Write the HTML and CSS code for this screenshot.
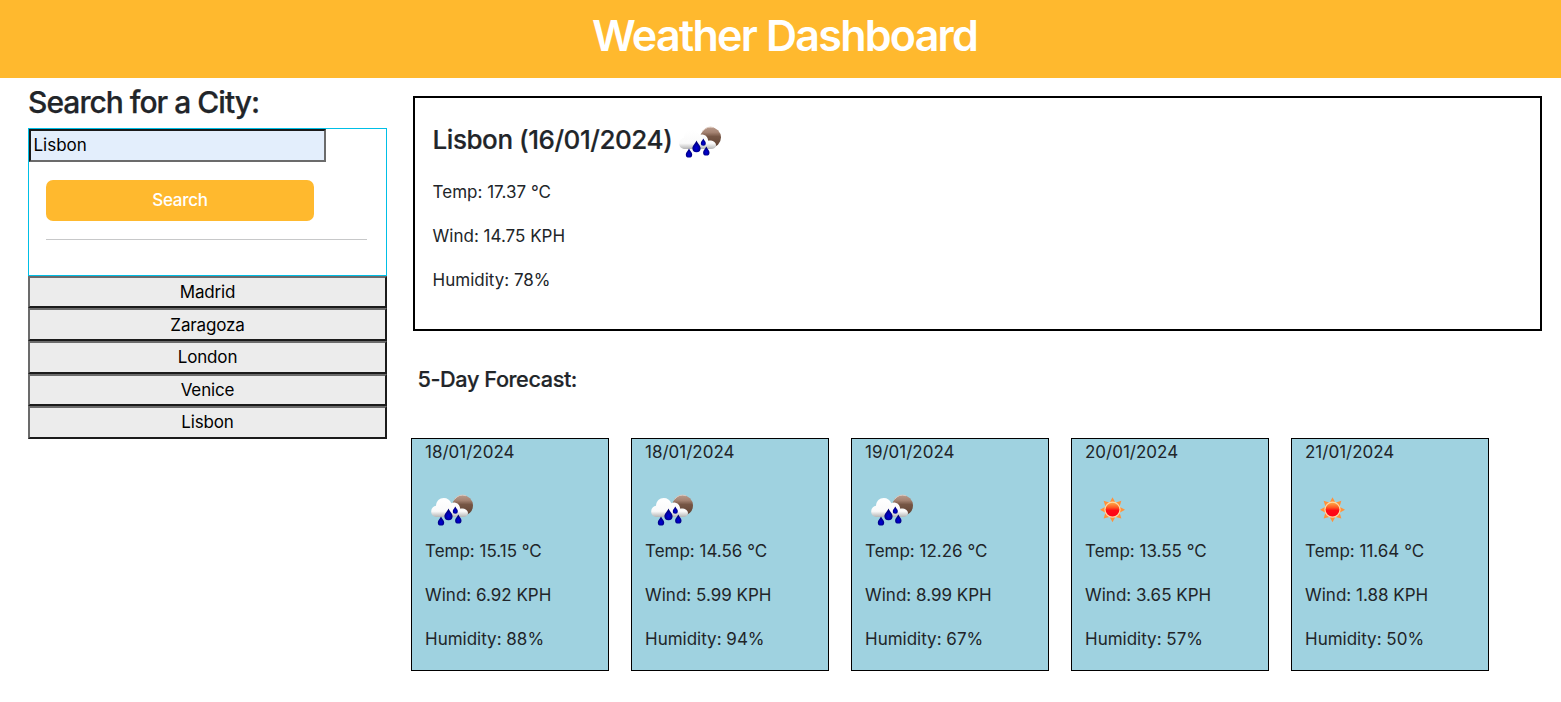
FILE: index.html
```html
<!DOCTYPE html>
<html lang="en">
<head>
<meta charset="utf-8">
<title>Weather Dashboard</title>
<link rel="stylesheet" href="styles.css">
</head>
<body>
<svg class="defs" width="0" height="0" aria-hidden="true">
  <defs>
    <linearGradient id="cloud" x1="0" y1="0" x2="0" y2="1">
      <stop offset="0" stop-color="#fff"/><stop offset=".7" stop-color="#fafafa"/><stop offset="1" stop-color="#b4b4b4"/>
    </linearGradient>
    <linearGradient id="disc" x1="0" y1="0" x2="0" y2="1">
      <stop offset="0" stop-color="#b8998a"/><stop offset=".25" stop-color="#a58372"/><stop offset=".45" stop-color="#765645"/><stop offset="1" stop-color="#5e4132"/>
    </linearGradient>
    <radialGradient id="drop" cx=".5" cy=".65" r=".6">
      <stop offset="0" stop-color="#0000dc"/><stop offset="1" stop-color="#00006a"/>
    </radialGradient>
    <linearGradient id="sun" x1="0" y1="0" x2="0" y2="1">
      <stop offset="0" stop-color="#ffb14a"/><stop offset=".35" stop-color="#ff5a22"/><stop offset=".55" stop-color="#ff0a14"/><stop offset="1" stop-color="#ff0018"/>
    </linearGradient>
    <symbol id="rain" viewBox="0 0 55 55">
      <circle cx="37.700" cy="22.500" r="10.300" fill="url(#disc)"/>
      <path d="M29.500 16.500A10.400 10.400 0 0 1 41 12.700" fill="none" stroke="#dcc8bd" stroke-width="1"/>
      <path d="M12 34C8.500 34 6.200 31.700 6.200 28.500C6.200 25.500 8 23.200 11 22.800C11.300 18 14.500 15 18.800 15C22.300 15 25 17 26.300 20.200C27.500 19.500 29 19.400 30.500 19.700C33.500 20.400 35 22.700 35.200 25.700C39.500 25.200 43 27.200 43 30.200C43 32.500 41 34 38 34Z" fill="url(#cloud)"/>
      <g fill="url(#drop)">
        <path d="M23.500 25.500C25 29 27.600 30.700 27.600 33.200A4.100 4.100 0 0 1 19.400 33.200C19.400 30.700 22 29 23.500 25.500Z"/>
        <path d="M30.300 23.500C31.300 25.700 32.800 26.500 32.800 28.200A2.500 2.500 0 0 1 27.800 28.200C27.800 26.500 29.300 25.700 30.300 23.500Z"/>
        <path d="M16 33.500C17.200 36.300 19.200 37.500 19.200 39.400A3.200 3.200 0 0 1 12.800 39.400C12.800 37.500 14.800 36.300 16 33.500Z"/>
        <path d="M33.300 31.500C34.500 34.300 36.500 35.500 36.500 37.400A3.200 3.200 0 0 1 30.100 37.400C30.100 35.500 32.100 34.300 33.300 31.500Z"/>
      </g>
    </symbol>
    <symbol id="clear" viewBox="-27.500 -26.700 55 55">
      <g fill="#ff913b">
        <path id="ray" d="M-2.700 -7.500L0 -12.500L2.700 -7.500Z"/>
        <use href="#ray" transform="rotate(45)"/><use href="#ray" transform="rotate(90)"/><use href="#ray" transform="rotate(135)"/><use href="#ray" transform="rotate(180)"/><use href="#ray" transform="rotate(225)"/><use href="#ray" transform="rotate(270)"/><use href="#ray" transform="rotate(315)"/>
      </g>
      <circle r="7.500" fill="url(#sun)" stroke="#ffd9a0" stroke-width="1.200"/>
    </symbol>
  </defs>
</svg>
<header class="banner"><h1>Weather Dashboard</h1></header>
<main class="layout">
  <aside class="sidebar">
    <h2>Search for a City:</h2>
    <form class="search">
      <input class="search-input" type="text" value="Lisbon">
      <button class="search-button" type="button">Search</button>
      <hr>
    </form>
    <div class="history">
      <button>Madrid</button>
      <button>Zaragoza</button>
      <button>London</button>
      <button>Venice</button>
      <button>Lisbon</button>
    </div>
  </aside>
  <div class="content">
    <section class="today">
      <h3><span>Lisbon (16/01/2024)</span><svg class="icon"><use href="#rain"/></svg></h3>
      <p>Temp: 17.37 °C</p>
      <p>Wind: 14.75 KPH</p>
      <p>Humidity: 78%</p>
    </section>
    <h4>5-Day Forecast:</h4>
    <section class="forecast">
      <article class="card"><p>18/01/2024</p><svg class="icon"><use href="#rain"/></svg><p>Temp: 15.15 °C</p><p>Wind: 6.92 KPH</p><p>Humidity: 88%</p></article>
      <article class="card"><p>18/01/2024</p><svg class="icon"><use href="#rain"/></svg><p>Temp: 14.56 °C</p><p>Wind: 5.99 KPH</p><p>Humidity: 94%</p></article>
      <article class="card"><p>19/01/2024</p><svg class="icon"><use href="#rain"/></svg><p>Temp: 12.26 °C</p><p>Wind: 8.99 KPH</p><p>Humidity: 67%</p></article>
      <article class="card"><p>20/01/2024</p><svg class="icon"><use href="#clear"/></svg><p>Temp: 13.55 °C</p><p>Wind: 3.65 KPH</p><p>Humidity: 57%</p></article>
      <article class="card"><p>21/01/2024</p><svg class="icon"><use href="#clear"/></svg><p>Temp: 11.64 °C</p><p>Wind: 1.88 KPH</p><p>Humidity: 50%</p></article>
    </section>
  </div>
</main>
</body>
</html>
```
FILE: styles.css
```css
* { box-sizing: border-box; }
body {
  margin: 0;
  background: #fff;
  color: #212529;
  font: 400 17px/26.4px Inter, "Liberation Sans", sans-serif;
  letter-spacing: -0.15px;
}
h1, h2, h3, h4, p { margin: 0; }
.defs { display: block; height: 0; }
.icon { display: block; width: 55px; height: 55px; }

.banner { height: 78px; background: #ffb92e; padding: 9px 0 0 8px; text-align: center; }
.banner h1 { color: #fff; font-size: 43px; line-height: 52px; font-weight: 600; letter-spacing: -1.75px; word-spacing: 1px; }

.layout { display: flex; align-items: flex-start; }
.sidebar { width: 359px; margin-left: 28px; padding-top: 6px; flex: none; }
.sidebar h2 { font-size: 30px; line-height: 36px; font-weight: 500; letter-spacing: -0.98px; margin-bottom: 8px; white-space: nowrap; -webkit-text-stroke: 0.25px #212529; }
.search { height: 148px; border: 1px solid #00bfe6; }
.search-input {
  display: block; width: 297px; height: 33px; padding: 0 2px 2px 2.5px;
  border: 2px solid; border-color: #1b1b1b #6b6b6b #6b6b6b #1b1b1b; border-radius: 0;
  background: #e3eefc; color: #000; font: inherit; letter-spacing: 0; outline: none;
}
.search-button {
  display: block; width: 268px; height: 41px; margin: 18px 0 18px 17px; padding: 0;
  border: 0; border-radius: 7px; background: #ffb92e; color: #fff;
  font: inherit; font-weight: 500; letter-spacing: -0.25px;
}
.search hr { margin: 0 19px 0 17px; border: 0; border-top: 1px solid #c7c8c9; }
.history { display: flex; flex-direction: column; margin-top: -0.2px; }
.history button {
  height: 32.6px; padding: 0; border: 2px solid; border-color: #6b6b6b #1b1b1b #1b1b1b #6b6b6b;
  background: #ececec; color: #000; font: inherit; letter-spacing: inherit;
}

.content { width: 1131px; margin-left: 24px; padding-top: 18px; }
.today { margin-left: 2px; height: 235px; border: 2px solid #000; padding: 17px 17.6px; }
.today h3 { display: flex; font-size: 26px; line-height: 50px; font-weight: 500; letter-spacing: -0.45px; margin-bottom: 8.8px; -webkit-text-stroke: 0.2px #212529; }
.today h3 .icon { -webkit-text-stroke: 0; }
.today h3 span { width: 240.6px; white-space: nowrap; }
.today p, .card p { margin-bottom: 17.6px; letter-spacing: 0; }
.content h4 { margin: 33px 0 43px 6.5px; font-size: 21.7px; line-height: 31px; font-weight: 500; letter-spacing: -0.42px; -webkit-text-stroke: 0.2px #212529; }
.forecast { display: flex; gap: 22px; }
.card { width: 198px; height: 233px; padding: 0 13px; border: 1px solid #000; background: #9fd2e0; }
```
